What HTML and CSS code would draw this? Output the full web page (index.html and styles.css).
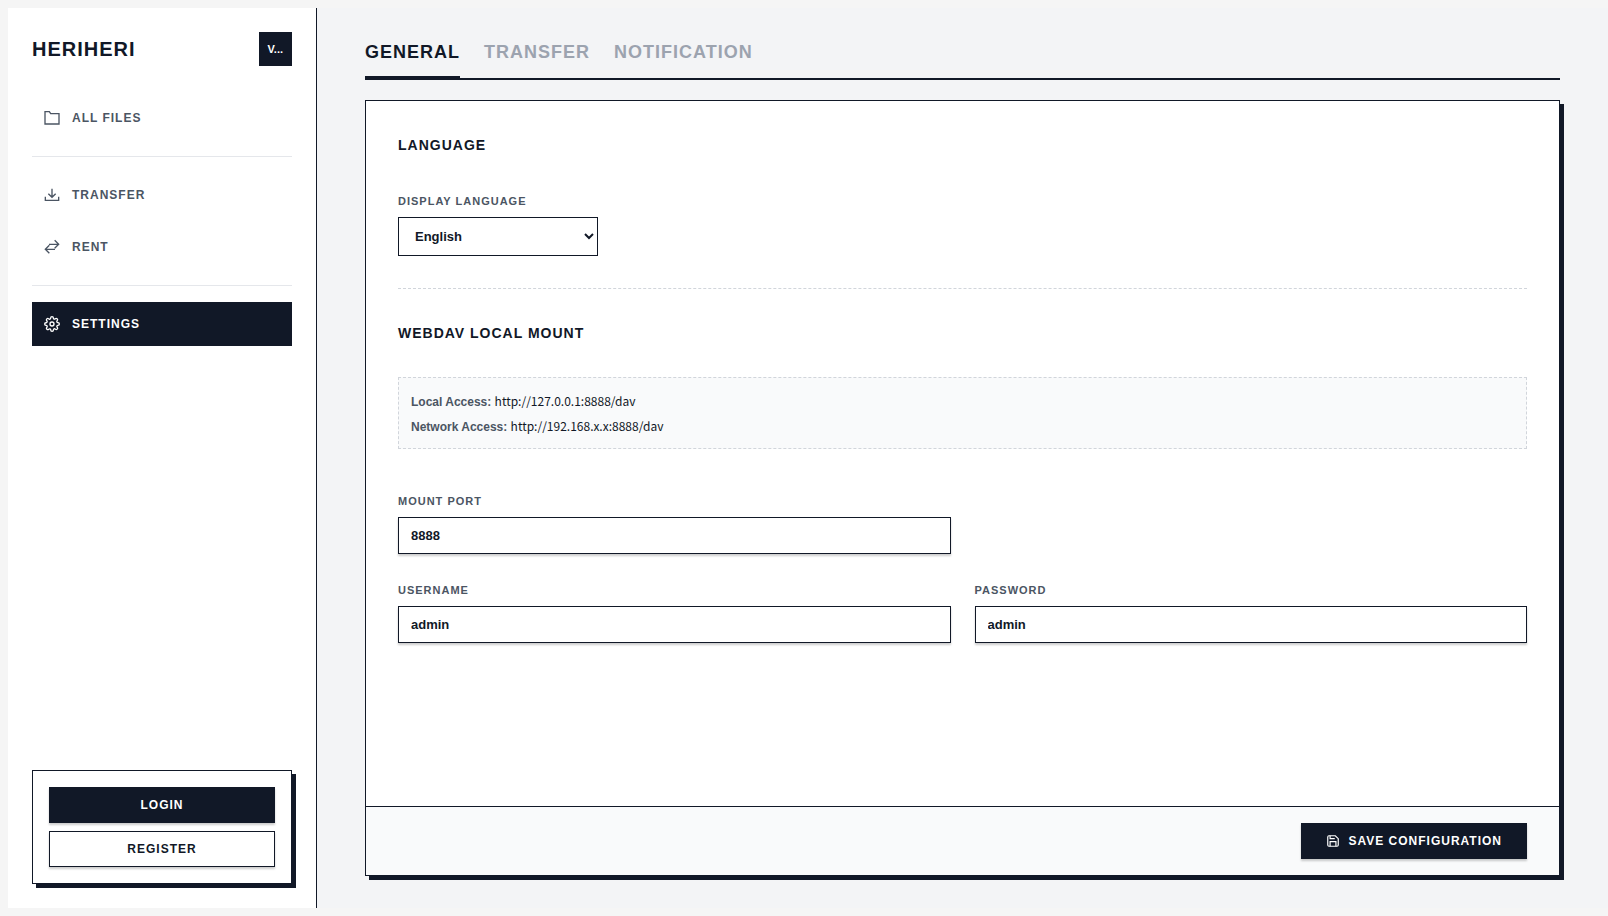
FILE: index.html
```html
<!DOCTYPE html>
<html lang="en">
  <head>
    <meta charset="UTF-8">
    <meta name="viewport" content="width=device-width, initial-scale=1.0">
    <title>HERIHERI</title>
    <link rel="stylesheet" href="styles.css">
  </head>
  <body>
    <div class="app">
      <aside class="sidebar">
        <header class="brand">
          <h1>HERIHERI</h1>
          <span class="version">V...</span>
        </header>
        <nav class="menu">
          <a href="#files" class="menu-item">
            <svg class="icon" viewBox="0 0 24 24" stroke-width="2"><path d="M1.500 2.500H8l2 3h12.500v15.500h-21z"/></svg>
            All Files
          </a>
          <hr>
          <a href="#transfer" class="menu-item">
            <svg class="icon" viewBox="0 0 24 24" stroke-width="2"><path d="M12 2.500v13M6.500 10l5.500 5.500 5.500-5.500M2 14.500v5.500h20v-5.500"/></svg>
            Transfer
          </a>
          <a href="#rent" class="menu-item">
            <svg class="icon" viewBox="0 0 24 24" stroke-width="2"><path d="M7.500 8H21M16 2l6 6-6 6M16.500 15.500H3M8 9.500l-6 6 6 6"/></svg>
            Rent
          </a>
          <hr>
          <a href="#settings" class="menu-item active">
            <svg class="icon" viewBox="0 0 24 24" stroke-width="2"><circle cx="12" cy="12" r="3"/><path d="M19.400 15a1.650 1.650 0 0 0 .33 1.820l.06.060a2 2 0 0 1-2.830 2.830l-.06-.06a1.650 1.650 0 0 0-1.820-.33 1.650 1.650 0 0 0-1 1.510V21a2 2 0 0 1-4 0v-.09A1.650 1.650 0 0 0 9 19.400a1.650 1.650 0 0 0-1.820.33l-.06.06a2 2 0 0 1-2.830-2.830l.06-.06a1.650 1.650 0 0 0 .33-1.820 1.650 1.650 0 0 0-1.510-1H3a2 2 0 0 1 0-4h.09A1.650 1.650 0 0 0 4.600 9a1.650 1.650 0 0 0-.33-1.820l-.06-.06a2 2 0 0 1 2.830-2.830l.06.06a1.650 1.650 0 0 0 1.820.33H9a1.650 1.650 0 0 0 1-1.510V3a2 2 0 0 1 4 0v.09a1.650 1.650 0 0 0 1 1.510 1.650 1.650 0 0 0 1.820-.33l.06-.06a2 2 0 0 1 2.830 2.830l-.06.06a1.650 1.650 0 0 0-.33 1.820V9a1.650 1.650 0 0 0 1.510 1H21a2 2 0 0 1 0 4h-.09a1.650 1.650 0 0 0-1.510 1z"/></svg>
            Settings
          </a>
        </nav>
        <div class="account">
          <button type="button" class="btn btn-dark">Login</button>
          <button type="button" class="btn">Register</button>
        </div>
      </aside>

      <main>
        <nav class="tabs">
          <button type="button" class="tab active">General</button>
          <button type="button" class="tab">Transfer</button>
          <button type="button" class="tab">Notification</button>
        </nav>
        <form class="panel">
          <div class="panel-body">
            <section>
              <h2>Language</h2>
              <div class="field">
                <label for="language">Display Language</label>
                <select id="language">
                  <option>English</option>
                </select>
              </div>
            </section>
            <section>
              <h2>WebDAV Local Mount</h2>
              <div class="info">
                <p><strong>Local Access:</strong> <span class="url">http://127.0.0.1:8888/dav</span></p>
                <p><strong>Network Access:</strong> <span class="url">http://192.168.x.x:8888/dav</span></p>
              </div>
              <div class="fields">
                <div class="field">
                  <label for="port">Mount Port</label>
                  <input type="text" id="port" value="8888">
                </div>
                <div class="field first">
                  <label for="username">Username</label>
                  <input type="text" id="username" value="admin">
                </div>
                <div class="field">
                  <label for="password">Password</label>
                  <input type="text" id="password" value="admin">
                </div>
              </div>
            </section>
          </div>
          <footer>
            <button type="button" class="btn btn-dark btn-save">
              <svg class="icon" viewBox="0 0 24 24" stroke-width="2"><path d="M19 21H5a2 2 0 0 1-2-2V5a2 2 0 0 1 2-2h11l5 5v11a2 2 0 0 1-2 2z"/><path d="M17 21v-8H7v8M7 3v5h8"/></svg>
              Save Configuration
            </button>
          </footer>
        </form>
      </main>
    </div>
  </body>
</html>
```
FILE: styles.css
```css
* {
  box-sizing: border-box;
}
body {
  margin: 8px 0 8px 8px;
  background-color: #f5f5f5;
  color: #111827;
  font-family: "Liberation Sans", Arial, sans-serif;
}
h1, h2, p {
  margin: 0;
}
button, input, select {
  font-family: inherit;
  color: inherit;
}
.app {
  display: flex;
  min-height: calc(100vh - 16px);
}
.sidebar {
  display: flex;
  flex-direction: column;
  flex: 0 0 309px;
  padding: 24px;
  background-color: white;
  border-right: 1px solid #111827;
}
.brand {
  display: flex;
  justify-content: space-between;
  align-items: center;
  margin-bottom: 30px;
}
.brand h1 {
  font-size: 20px;
  letter-spacing: 1px;
}
.version {
  padding: 8px 9px;
  background-color: #111827;
  color: white;
  font-size: 11px;
  font-weight: bold;
  line-height: 18px;
}
.menu {
  display: flex;
  flex-direction: column;
}
.menu hr {
  width: 100%;
  margin: 16px 0;
  border: none;
  border-top: 1px solid #e5e7eb;
}
.menu-item {
  display: flex;
  align-items: center;
  gap: 12px;
  height: 44px;
  padding: 0 12px;
  color: #4b5563;
  font-size: 12px;
  font-weight: bold;
  letter-spacing: 1px;
  text-decoration: none;
  text-transform: uppercase;
}
.menu-item + .menu-item {
  margin-top: 8px;
}
.menu-item.active {
  background-color: #111827;
  color: white;
}
.icon {
  width: 16px;
  height: 16px;
  fill: none;
  stroke: currentColor;
}
.account {
  display: flex;
  flex-direction: column;
  gap: 8px;
  margin-top: auto;
  padding: 16px;
  border: 1px solid #111827;
  box-shadow: 4px 4px 0 #111827;
}
.btn {
  height: 36px;
  padding: 0 24px;
  background-color: white;
  border: 1px solid #111827;
  box-shadow: 0 2px 2px rgba(0, 0, 0, 0.2);
  font-size: 12px;
  font-weight: bold;
  letter-spacing: 1px;
  text-transform: uppercase;
}
.btn-dark {
  background-color: #111827;
  color: white;
}
main {
  display: flex;
  flex-direction: column;
  flex: 1;
  min-width: 0;
  padding: 32px 48px;
  background-color: #f3f4f6;
}
.tabs {
  display: flex;
  gap: 24px;
  margin-bottom: 20px;
  border-bottom: 2px solid #111827;
}
.tab {
  margin-bottom: -2px;
  padding: 0 0 12px;
  background: none;
  border: none;
  border-bottom: 4px solid transparent;
  color: #9ca3af;
  font-size: 18px;
  font-weight: bold;
  line-height: 24px;
  letter-spacing: 1px;
  text-transform: uppercase;
}
.tab.active {
  border-bottom-color: #111827;
  color: #111827;
}
.panel {
  display: flex;
  flex-direction: column;
  flex: 1;
  background-color: white;
  border: 1px solid #111827;
  box-shadow: 4px 4px 0 #111827;
}
.panel-body {
  flex: 1;
  padding: 32px;
}
section + section {
  margin-top: 32px;
  padding-top: 32px;
  border-top: 1px dashed #d1d5db;
}
h2 {
  margin-bottom: 32px;
  font-size: 14px;
  line-height: 24px;
  letter-spacing: 1px;
  text-transform: uppercase;
}
.field {
  display: flex;
  flex-direction: column;
  gap: 4px;
}
.field label {
  color: #4b5563;
  font-size: 11px;
  font-weight: bold;
  line-height: 24px;
  letter-spacing: 1px;
  text-transform: uppercase;
}
.field select {
  width: 200px;
  height: 39px;
  padding: 0 12px;
  background-color: white;
  border: 1px solid #111827;
  border-radius: 0;
  font-size: 13px;
  font-weight: bold;
}
.field input {
  height: 37px;
  padding: 0 12px;
  background-color: white;
  border: 1px solid #111827;
  box-shadow: 0 2px 2px rgba(0, 0, 0, 0.2);
  font-size: 13px;
  font-weight: bold;
}
.info {
  display: flex;
  flex-direction: column;
  gap: 4px;
  margin-bottom: 40px;
  padding: 12px;
  background-color: #f9fafb;
  border: 1px dashed #d1d5db;
  font-size: 12px;
  line-height: 21px;
}
.info p {
  height: 21px;
}
.info strong {
  color: #4b5563;
}
.url {
  font-family: "Noto Sans CJK SC", sans-serif;
}
.fields {
  display: grid;
  grid-template-columns: 1fr 1fr;
  gap: 24px;
}
.field.first {
  grid-column: 1;
}
footer {
  display: flex;
  justify-content: flex-end;
  padding: 16px 32px;
  background-color: #f9fafb;
  border-top: 1px solid #111827;
}
.btn-save {
  display: flex;
  align-items: center;
  gap: 8px;
}
.btn-save .icon {
  width: 14px;
  height: 14px;
}
```
